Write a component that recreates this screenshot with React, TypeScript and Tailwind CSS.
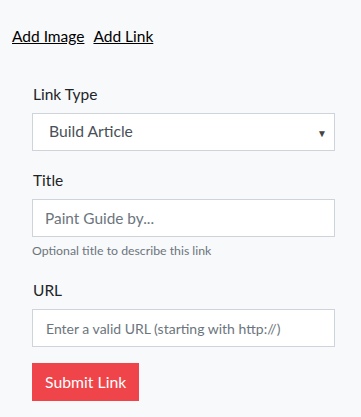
import React from 'react';

const font = { fontFamily: 'Lato, "Noto Sans", sans-serif' };

export default function App() {
  return (
    <div className="w-[361px] h-[417px] bg-[#f8f9fa] text-[#212529]" style={font}>
      <div className="pt-[26px] pl-[12px] flex gap-[9px] text-[15.5px] leading-[20px]">
        <a href="#" className="underline text-black">Add Image</a>
        <a href="#" className="underline text-black">Add Link</a>
      </div>

      <form className="pl-[32px] pr-[26px] pt-[38px]">
        {/* Link type */}
        <label className="block text-[15.5px] leading-[20px] mb-[9px] pl-[1px]">Link Type</label>
        <div className="relative">
          <select className="appearance-none w-full h-[38px] bg-white border border-[#ced4da] pl-[16px] text-[15.7px] text-[#495057] outline-none">
            <option>Build Article</option>
          </select>
          <span className="absolute right-[8px] top-[13px] text-[10px] text-[#444] pointer-events-none">▼</span>
        </div>

        {/* Title */}
        <label className="block text-[15.5px] leading-[20px] mt-[19px] mb-[9px] pl-[1px]">Title</label>
        <input
          placeholder="Paint Guide by..."
          className="w-full h-[38px] bg-white border border-[#ced4da] px-[12px] text-[15.4px] placeholder-[#6c757d] outline-none"
        />
        <p className="text-[12.3px] leading-[16px] text-[#6c757d] mt-[6px]">Optional title to describe this link</p>

        {/* URL */}
        <label className="block text-[15.5px] leading-[20px] mt-[21px] mb-[9px] pl-[1px]">URL</label>
        <input
          placeholder="Enter a valid URL (starting with http://)"
          className="w-full h-[38px] bg-white border border-[#ced4da] px-[13px] text-[14px] placeholder-[#6c757d] outline-none"
        />

        <button type="button" className="mt-[16px] h-[38px] px-[13px] bg-[#ef444a] text-white text-[15.8px]">
          Submit Link
        </button>
      </form>
    </div>
  );
}
